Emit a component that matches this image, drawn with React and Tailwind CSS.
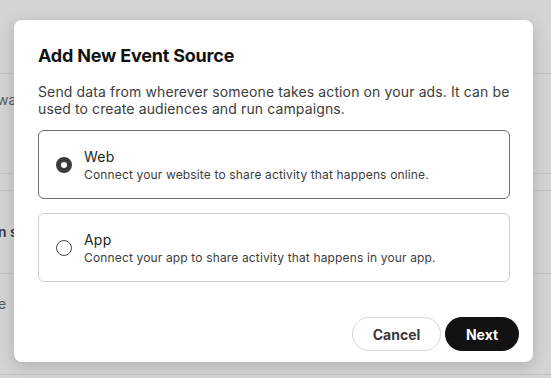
import React, { useState } from 'react';

const sources = [
  { id: 'web', title: 'Web', desc: 'Connect your website to share activity that happens online.' },
  { id: 'app', title: 'App', desc: 'Connect your app to share activity that happens in your app.' },
];

function Radio({ checked }) {
  return (
    <span
      className={`shrink-0 w-4 h-4 rounded-full bg-white ${
        checked ? 'border-[5px] border-[#3b3b3b]' : 'border border-[#4a4a4a]'
      }`}
    />
  );
}

export default function App() {
  const [selected, setSelected] = useState('web');

  return (
    <div
      className="relative w-[551px] h-[378px] overflow-hidden bg-[#d4d4d4] text-[#5a5a5a]"
      style={{ fontFamily: 'Inter, "Liberation Sans", sans-serif' }}
    >
      {/* page behind the overlay */}
      <div className="h-[74px] border-b border-[#c2c2c2]" />
      <div className="h-[100px] border-b border-[#c2c2c2] pt-[16px] text-sm leading-[20px] -ml-[3px]">wa</div>
      <div className="h-[17px] border-b border-[#c2c2c2]" />
      <div className="h-[83px] border-b border-[#c2c2c2] flex items-center text-sm font-semibold text-[#3a3a3a] -ml-[2px]">n s</div>
      <div className="h-[101px] border-b border-[#c2c2c2] pt-[20px] text-sm leading-[20px] -ml-[2px]">e</div>

      {/* dialog */}
      <div className="absolute left-[14px] top-[20px] w-[519px] h-[342px] bg-white rounded-lg shadow-[0_4px_16px_rgba(0,0,0,0.18)] flex flex-col pt-[24px] pl-[24px] pr-[23px] pb-[11px]">
        <h2 className="text-[18px] leading-[24px] font-bold text-[#121212] tracking-[-0.2px]">Add New Event Source</h2>
        <p className="mt-[15px] text-[14px] leading-[17px] tracking-[0.12px] text-[#3d3d3d]">
          Send data from wherever someone takes action on your ads. It can be used to create audiences and run campaigns.
        </p>

        <div className="mt-[13px] flex flex-col gap-[14px]">
          {sources.map((s) => (
            <button
              key={s.id}
              onClick={() => setSelected(s.id)}
              className={`h-[69px] rounded-md border bg-white flex items-center gap-[12px] pl-[17px] text-left ${
                selected === s.id ? 'border-[#6e6e6e]' : 'border-[#cfcfcf]'
              }`}
            >
              <Radio checked={selected === s.id} />
              <span className="flex flex-col">
                <span className="text-[14px] leading-[20px] tracking-[0.2px] text-[#1f1f1f]">{s.title}</span>
                <span className="text-[12px] leading-[16px] tracking-[0.15px] text-[#3d3d3d]">{s.desc}</span>
              </span>
            </button>
          ))}
        </div>

        <div className="mt-auto flex justify-end gap-[4px] -mr-[9px]">
          <button className="w-[89px] h-[34px] rounded-full border border-[#d6d6d6] bg-white text-[14px] font-bold text-[#3a3a3a]">
            Cancel
          </button>
          <button className="w-[74px] h-[34px] rounded-full bg-[#121212] text-[14px] font-bold text-white">
            Next
          </button>
        </div>
      </div>
    </div>
  );
}
